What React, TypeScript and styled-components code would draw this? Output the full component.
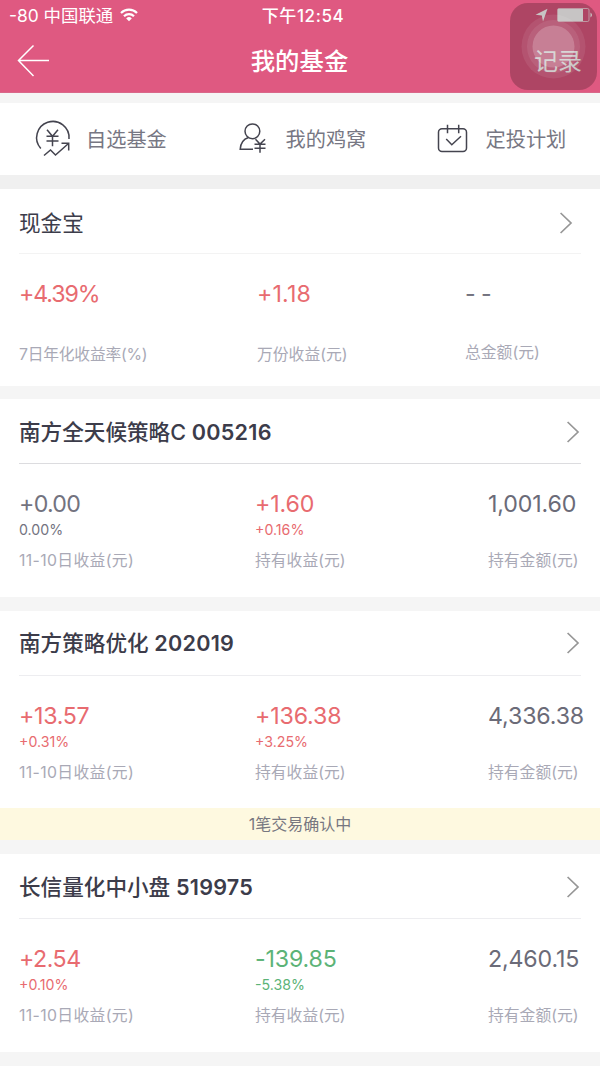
import React from 'react';
import styled, { createGlobalStyle } from 'styled-components';

const GlobalStyle = createGlobalStyle`
  * { box-sizing: border-box; }
  body {
    margin: 0;
    background: #f5f5f5;
    font-family: Inter, "Noto Sans CJK SC", sans-serif;
  }
`;

type Tone = 'up' | 'down' | 'flat' | 'amount';
const tones: Record<Tone, string> = {
  up: '#e86b70',
  down: '#5cb377',
  flat: '#73737f',
  amount: '#6b6b78',
};

const Screen = styled.div`
  width: 600px;
  height: 1066px;
  overflow: hidden;
  background: #f5f5f5;
`;

const Header = styled.header`
  position: relative;
  height: 93px;
  background: #df5981;
  border-bottom: 1px solid #d9688a;
  color: #fff;
`;

const StatusBar = styled.div`
  display: grid;
  grid-template-columns: 1fr auto 1fr;
  align-items: center;
  height: 30px;
  padding: 0 7px 0 9px;
  line-height: 30px;
`;

const Carrier = styled.div`
  display: flex;
  align-items: center;
  gap: 7px;
  padding-top: 1px;
  font-size: 17.4px;
  white-space: pre;
  svg { margin-top: -2px; }
`;

const Clock = styled.div`
  font-size: 17px;
  font-weight: 500;
  letter-spacing: 0.6px;
  padding: 1px 0 0 4px;
`;

const Indicators = styled.div`
  display: flex;
  justify-content: flex-end;
  align-items: center;
  gap: 8px;
  margin-top: -1px;
`;

const NavBar = styled.div`
  display: grid;
  grid-template-columns: 1fr auto 1fr;
  align-items: center;
  height: 62px;
  padding: 0 18px 0 17px;
`;

const NavTitle = styled.h1`
  margin: 0;
  font-size: 24.4px;
  font-weight: 500;
  line-height: 36px;
`;

const NavAction = styled.div`
  justify-self: end;
  padding-top: 1px;
  font-size: 24px;
  line-height: 36px;
`;

const AssistiveTouch = styled.div`
  position: absolute;
  top: 3px;
  left: 510px;
  width: 87px;
  height: 87px;
  border-radius: 18px;
  background: rgba(22, 10, 10, 0.24);
`;

const Shortcuts = styled.nav`
  display: grid;
  grid-template-columns: 204px 198px 198px;
  height: 72px;
  margin-top: 10px;
  background: #fff;
`;

const Shortcut = styled.div<{ $gap: number }>`
  display: flex;
  align-items: center;
  gap: ${(p) => p.$gap}px;
  padding-left: 35px;
  font-size: 20.2px;
  line-height: 30px;
  color: #777783;
  svg {
    flex: none;
    overflow: visible;
  }
`;

const ShortcutName = styled.span`
  padding-top: 2px;
`;

const Divider = styled.div<{ $height: number; $color?: string }>`
  height: ${(p) => p.$height}px;
  background: ${(p) => p.$color ?? '#f5f5f5'};
`;

const Card = styled.section<{ $height: number }>`
  height: ${(p) => p.$height}px;
  padding: 0 19px;
  background: #fff;
`;

const CardHeader = styled.div<{ $line: string; $inset: number; $drop?: number }>`
  display: flex;
  align-items: center;
  justify-content: space-between;
  height: 65px;
  padding-top: ${(p) => p.$drop ?? 0}px;
  padding-right: ${(p) => p.$inset}px;
  border-bottom: 1px solid ${(p) => p.$line};
`;

const CardTitle = styled.h2<{ $weight: number }>`
  margin: 0;
  font-size: 21.6px;
  font-weight: ${(p) => p.$weight};
  line-height: 32px;
  color: #3c3c4a;
`;

const FundCode = styled.span`
  font-weight: 600;
  letter-spacing: 0.25px;
`;

const Stats = styled.div<{ $columns: string }>`
  display: grid;
  grid-template-columns: ${(p) => p.$columns};
  padding-top: 24px;
`;

const Stat = styled.div`
  white-space: nowrap;
`;

const Value = styled.div<{ $tone: Tone; $tracking?: number }>`
  font-size: 23.2px;
  line-height: 32px;
  letter-spacing: ${(p) => p.$tracking ?? -0.15}px;
  color: ${(p) => tones[p.$tone]};
`;

const Rate = styled.div<{ $tone: Tone }>`
  height: 20px;
  font-size: 14.2px;
  line-height: 20px;
  color: ${(p) => tones[p.$tone]};
`;

const Label = styled.div<{ $gap: number; $tracking?: number }>`
  margin-top: ${(p) => p.$gap}px;
  font-size: 15.8px;
  line-height: 24px;
  letter-spacing: ${(p) => p.$tracking ?? 0}px;
  color: #a9a9b6;
`;

const Notice = styled.div`
  height: 32px;
  background: #fef9e0;
  color: #777780;
  font-size: 16px;
  line-height: 32px;
  text-align: center;
`;

const Chevron = () => (
  <svg width="13" height="22" viewBox="0 0 13 22" fill="none" stroke="#969696" strokeWidth="1.7">
    <path d="M0.6 1 L11 11 L0.6 21" />
  </svg>
);

interface Figure {
  value: string;
  tone: Tone;
  rate?: string;
  label: string;
  tracking?: number;
  labelTracking?: number;
}

interface FundCardProps {
  name: string;
  code: string;
  height: number;
  drop?: number;
  line?: string;
  figures: Figure[];
}

const FundCard = ({ name, code, height, drop, line = '#ededf0', figures }: FundCardProps) => (
  <Card $height={height}>
    <CardHeader $line={line} $inset={1} $drop={drop}>
      <CardTitle $weight={500}>
        {name} <FundCode>{code}</FundCode>
      </CardTitle>
      <Chevron />
    </CardHeader>
    <Stats $columns="236px 233px 1fr">
      {figures.map((f) => (
        <Stat key={f.label}>
          <Value $tone={f.tone} $tracking={f.tracking}>{f.value}</Value>
          <Rate $tone={f.tone}>{f.rate}</Rate>
          <Label $gap={9} $tracking={f.labelTracking}>{f.label}</Label>
        </Stat>
      ))}
    </Stats>
  </Card>
);

const figures = (
  a: [string, string, Tone, number?],
  b: [string, string, Tone],
  total: string,
): Figure[] => [
  { value: a[0], rate: a[1], tone: a[2], tracking: a[3], label: '11-10日收益(元)', labelTracking: 0.35 },
  { value: b[0], rate: b[1], tone: b[2], label: '持有收益(元)' },
  { value: total, tone: 'amount', label: '持有金额(元)' },
];

export default function App() {
  return (
    <Screen>
      <GlobalStyle />
      <Header>
        <StatusBar>
          <Carrier>
            <span>-80 中国联通</span>
            <svg width="18" height="14" viewBox="0 0 18 14" fill="none" stroke="#fff" strokeWidth="2.2">
              <path d="M1 5 A11.4 11.4 0 0 1 17 5" />
              <path d="M4 8.2 A7 7 0 0 1 14 8.2" />
              <path d="M9 13.2 L6.2 10.4 A4 4 0 0 1 11.8 10.4 Z" fill="#fff" stroke="none" />
            </svg>
          </Carrier>
          <Clock>下午12:54</Clock>
          <Indicators>
            <svg width="14" height="14" viewBox="0 0 14 14" fill="#fff">
              <path d="M12.5 0.8 L8 13.5 L6.8 7.6 L0.5 6.8 Z" />
            </svg>
            <svg width="36" height="14" viewBox="0 0 36 14">
              <rect x="0.5" y="0.5" width="31.5" height="13" rx="1.5" fill="none" stroke="#fff" strokeOpacity="0.65" />
              <rect x="1" y="1" width="25" height="12" fill="#fff" />
              <path d="M33.5 4.5 Q36.5 7 33.5 9.5 Z" fill="#fff" />
            </svg>
          </Indicators>
        </StatusBar>
        <NavBar>
          <svg width="33" height="34" viewBox="0 0 33 34" fill="none" stroke="#fff" strokeWidth="1.5">
            <path d="M16.5 1.5 L1.5 16.5 L16.5 32 M1.5 16.5 H32" />
          </svg>
          <NavTitle>我的基金</NavTitle>
          <NavAction>记录</NavAction>
        </NavBar>
        <AssistiveTouch>
          <svg width="87" height="87" viewBox="0 0 87 87" fill="#fff">
            <circle cx="43.5" cy="43.5" r="32" fillOpacity="0.08" />
            <circle cx="43.5" cy="43.5" r="26.5" fillOpacity="0.08" />
            <circle cx="43.5" cy="43.5" r="21" fillOpacity="0.2" />
          </svg>
        </AssistiveTouch>
      </Header>

      <Shortcuts>
        <Shortcut $gap={15}>
          <svg width="36" height="36" viewBox="0 0.5 36 36" fill="none" stroke="#44444f" strokeWidth="1.5">
            <path d="M5.8 28 A16.2 16.2 0 1 1 34 18.5" />
            <path d="M12 9.3 L17.5 15.8 L23 9.3 M17.5 15.8 V25.8 M11.5 15.8 H23.5 M11.5 20.6 H23.5" />
            <path d="M9 35 L15.5 29.5 L20.5 34.5 L33.5 23 M26.5 22.8 H33.7 V30" />
          </svg>
          <ShortcutName>自选基金</ShortcutName>
        </Shortcut>
        <Shortcut $gap={18.5}>
          <svg width="28" height="32" viewBox="0 0.7 28 32" fill="none" stroke="#44444f" strokeWidth="1.5">
            <circle cx="13.4" cy="9" r="7.4" />
            <path d="M9.5 15.2 C4 17 1.5 21 1.2 27 H14" />
            <path d="M16.5 17 L21 21.8 L26 17 M21 21.8 V30.5 M15.5 22 H26.5 M15.5 26 H26.5" />
          </svg>
          <ShortcutName>我的鸡窝</ShortcutName>
        </Shortcut>
        <Shortcut $gap={17.5}>
          <svg width="31" height="30" viewBox="0 0 31 30" fill="none" stroke="#44444f" strokeWidth="1.5">
            <rect x="1.5" y="4.8" width="28" height="22.8" rx="3.5" />
            <path d="M10.5 0.8 V9.3 M21.7 0.8 V9.3 M9.2 15 L14.8 20.8 L24 12.3" />
          </svg>
          <ShortcutName>定投计划</ShortcutName>
        </Shortcut>
      </Shortcuts>

      <Divider $height={14} $color="#f0f0f0" />
      <Card $height={197}>
        <CardHeader $line="#f3f3f3" $inset={8} $drop={3}>
          <CardTitle $weight={400}>现金宝</CardTitle>
          <Chevron />
        </CardHeader>
        <Stats $columns="238px 208px 1fr">
          <Stat>
            <Value $tone="up" $tracking={-1.1}>+4.39%</Value>
            <Label $gap={33} $tracking={-0.25}>7日年化收益率(%)</Label>
          </Stat>
          <Stat>
            <Value $tone="up" $tracking={0.15}>+1.18</Value>
            <Label $gap={33}>万份收益(元)</Label>
          </Stat>
          <Stat>
            <Value $tone="flat" $tracking={-0.6}>- -</Value>
            <Label $gap={31}>总金额(元)</Label>
          </Stat>
        </Stats>
      </Card>

      <Divider $height={13} />
      <FundCard
        name="南方全天候策略C"
        code="005216"
        height={198}
        drop={2}
        line="#dcdcdf"
        figures={figures(['+0.00', '0.00%', 'flat', -0.7], ['+1.60', '+0.16%', 'up'], '1,001.60')}
      />
      <Divider $height={14} />
      <FundCard
        name="南方策略优化"
        code="202019"
        height={197}
        figures={figures(['+13.57', '+0.31%', 'up', -0.3], ['+136.38', '+3.25%', 'up'], '4,336.38')}
      />
      <Notice>1笔交易确认中</Notice>
      <Divider $height={14} />
      <FundCard
        name="长信量化中小盘"
        code="519975"
        height={198}
        drop={2}
        figures={figures(['+2.54', '+0.10%', 'up', -0.5], ['-139.85', '-5.38%', 'down'], '2,460.15')}
      />
    </Screen>
  );
}
